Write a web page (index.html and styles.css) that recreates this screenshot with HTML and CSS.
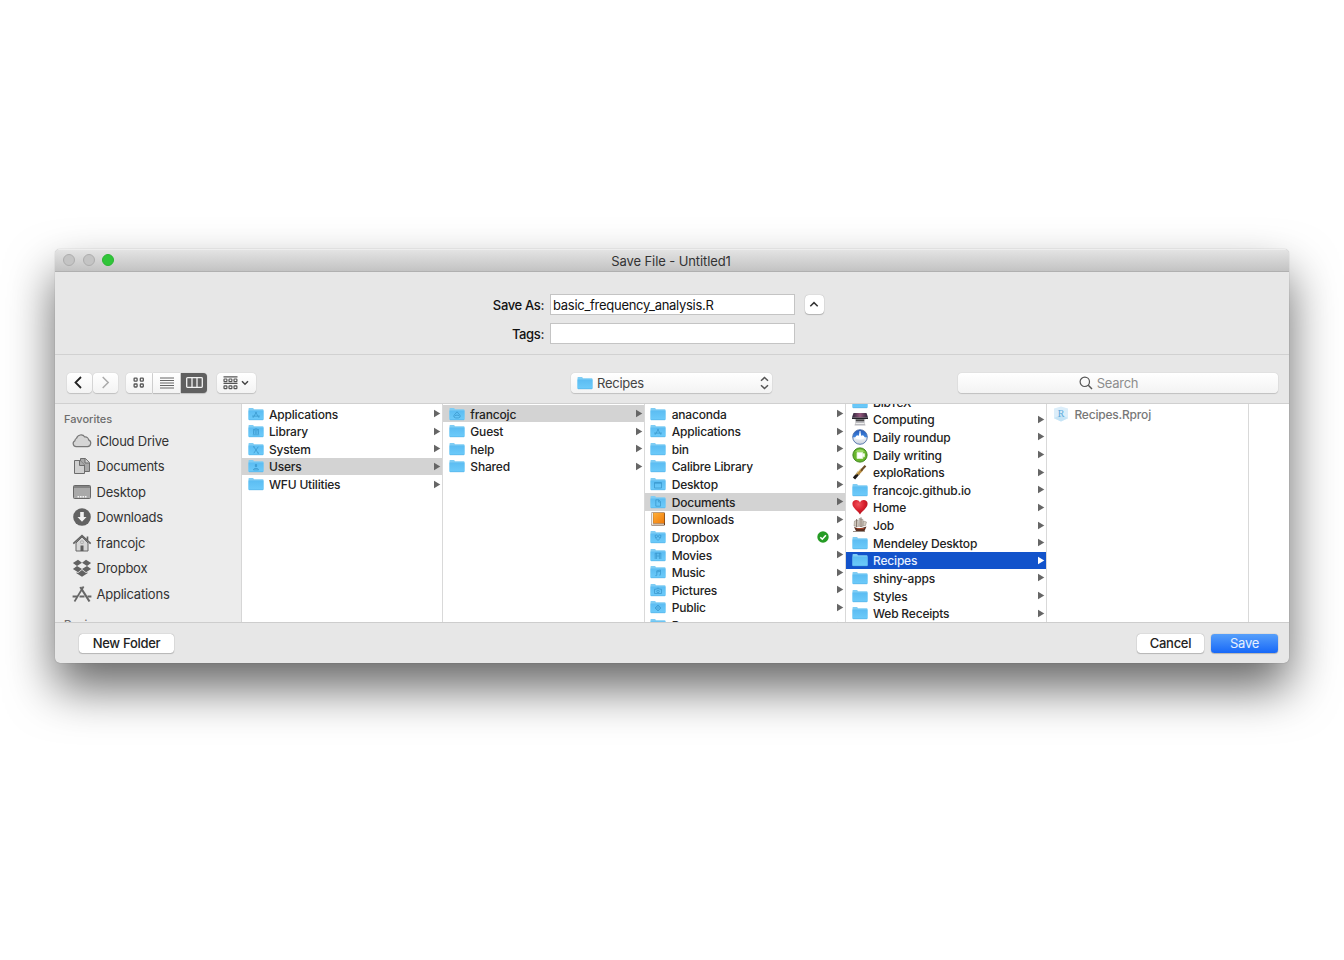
FILE: index.html
```html
<!DOCTYPE html>
<html lang="en">
<head>
<meta charset="utf-8">
<title>Save File - Untitled1</title>
<link rel="stylesheet" href="styles.css">
</head>
<body>
<svg class="defs" width="0" height="0">
  <defs>
    <linearGradient id="gFolder" x1="0" y1="0" x2="0" y2="1"><stop offset="0" stop-color="#5bbcf2"/><stop offset="1" stop-color="#6dcbfa"/></linearGradient>
    <linearGradient id="gOrange" x1="0" y1="0" x2="1" y2="1"><stop offset="0" stop-color="#ffb03a"/><stop offset="1" stop-color="#f07a08"/></linearGradient>
    <radialGradient id="gHeart" cx=".4" cy=".3" r=".8"><stop offset="0" stop-color="#f0525a"/><stop offset=".5" stop-color="#d81f2c"/><stop offset="1" stop-color="#9c0c17"/></radialGradient>
    <linearGradient id="gBlue" x1="0" y1="0" x2="0" y2="1"><stop offset="0" stop-color="#2458b8"/><stop offset=".5" stop-color="#3f86e0"/><stop offset=".55" stop-color="#eef2f8"/><stop offset="1" stop-color="#c9d0da"/></linearGradient>
    <linearGradient id="gPurple" x1="0" y1="0" x2="1" y2="0"><stop offset="0" stop-color="#2a2338"/><stop offset=".5" stop-color="#96587f"/><stop offset="1" stop-color="#2a2338"/></linearGradient>
  </defs>
  <symbol id="folder" viewBox="0 0 16 14"><path d="M.5 1.800Q.5 1 1.300 1H4.700Q5.200 1 5.600 1.500L6 2.200H14.700Q15.500 2.200 15.500 3V12.300Q15.500 13 14.800 13H1.200Q.5 13 .5 12.300Z" fill="#7fcdf4"/><path d="M.5 3.400H15.500V12.300Q15.500 13 14.800 13H1.200Q.5 13 .5 12.300Z" fill="url(#gFolder)"/><path d="M1 12.800H15" stroke="#4aa9de" stroke-width=".5"/></symbol>
  <symbol id="arrow" viewBox="0 0 8 9"><path d="M1 .8L7.300 4.500L1 8.200Z" fill="currentColor"/></symbol>
  <symbol id="gApps" viewBox="0 0 16 14"><path d="M5 10.800L8.600 4.800M11 10.800L7.400 4.800M4 9.100H12" /></symbol>
  <symbol id="gLib" viewBox="0 0 16 14"><path d="M5 6L8 4.700L11 6ZM5.500 6.500V10M7.200 6.500V10M8.900 6.500V10M10.500 6.500V10M4.800 10.800H11.200"/></symbol>
  <symbol id="gX" viewBox="0 0 16 14"><path d="M5.800 4.800L10.200 11.200M10.200 4.800L5.800 11.200M5 4.800H6.500M9.500 11.200H11"/></symbol>
  <symbol id="gUser" viewBox="0 0 16 14"><path d="M8 5.200V8M7.400 5.600H8.600V7.600H7.400ZM5.400 10.900Q5.400 9.400 8 9.400T10.600 10.900Z"/></symbol>
  <symbol id="gHome" viewBox="0 0 16 14"><path d="M8 4.800L5 8.300Q4 11 8 11T11 8.300ZM5.500 9.200L7 8.200H9L10.500 9.200"/></symbol>
  <symbol id="gDesk" viewBox="0 0 16 14"><path d="M4.500 5.500H11.500V11H4.500ZM4.500 6.200H11.500"/></symbol>
  <symbol id="gDoc" viewBox="0 0 16 14"><path d="M5.800 4.800H8.800L10.500 6.600V11.200H5.800ZM8.600 5V7H10.500"/></symbol>
  <symbol id="gBox" viewBox="0 0 16 14"><path d="M5 5.500L6.500 5L8 6.300L9.500 5L11 5.500L10.400 8L8 10.500L5.600 8ZM8 6.300L6 8M8 6.300L10 8"/></symbol>
  <symbol id="gFilm" viewBox="0 0 16 14"><path d="M5.200 5V11M10.800 5V11M6.600 5V11M9.400 5V11M5.200 5.200H10.800M6.600 8H9.400"/></symbol>
  <symbol id="gNote" viewBox="0 0 16 14"><path d="M6.800 10.300V5.800L10.500 5V9.700M6.800 7L10.500 6.200M5.400 10.600H6.800M9.200 10H10.500"/></symbol>
  <symbol id="gCam" viewBox="0 0 16 14"><path d="M4.500 6.200H6.400L7 5.300H9L9.600 6.200H11.500V10.500H4.500ZM8 7.200A1.200 1.200 0 1 0 8 9.700A1.200 1.200 0 1 0 8 7.200"/></symbol>
  <symbol id="gPub" viewBox="0 0 16 14"><path d="M8 5L11 8L8 11L5 8ZM8 6.500L9.500 8L8 9.500L6.500 8Z"/></symbol>
</svg>

<main class="window">
  <header class="titlebar">
    <div class="lights"><i></i><i></i><i class="on"></i></div>
    <h1>Save File - Untitled1</h1>
  </header>

  <section class="form">
    <span class="lbl">Save As:</span><div class="field"><span>basic_frequency_analysis.R</span></div>
    <button class="expand"><svg width="10" height="7" viewBox="0 0 10 7"><path d="M1.300 5.300L5 1.600L8.700 5.300" fill="none" stroke="#333" stroke-width="1.500"/></svg></button>
    <span class="lbl">Tags:</span><div class="field"></div>
  </section>

  <nav class="toolbar">
    <div class="history">
      <button><svg width="9" height="13" viewBox="0 0 9 13"><path d="M7 1L1.500 6.500L7 12" fill="none" stroke="#222" stroke-width="1.800"/></svg></button>
      <button><svg width="9" height="13" viewBox="0 0 9 13"><path d="M1.700 1L7.200 6.500L1.700 12" fill="none" stroke="#aaa" stroke-width="1.500"/></svg></button>
    </div>
    <div class="views">
      <button><svg width="12" height="12" viewBox="0 0 12 12" fill="none" stroke="#555" stroke-width="1.300"><rect x="1.100" y="1.100" width="3" height="3" rx=".7"/><rect x="7.300" y="1.100" width="3" height="3" rx=".7"/><rect x="1.100" y="7" width="3" height="3" rx=".7"/><rect x="7.300" y="7" width="3" height="3" rx=".7"/></svg></button>
      <button><svg width="14" height="12" viewBox="0 0 14 12"><path d="M0 1H14M0 3.500H14M0 6H14M0 8.500H14M0 11H14" stroke="#666" stroke-width="1.100"/></svg></button>
      <button class="active"><svg width="17" height="11" viewBox="0 0 17 11" fill="none" stroke="#f2f2f2" stroke-width="1.300"><rect x=".7" y=".7" width="15.600" height="9.600" rx=".8"/><path d="M6 1V10M11 1V10"/></svg></button>
    </div>
    <button class="group"><svg width="15" height="14" viewBox="0 0 15 14" fill="none" stroke="#555" stroke-width="1.200"><path d="M.5.8H14.500M.5 7.300H14.500"/><g><rect x="1" y="3" width="2.900" height="2.600" rx=".6"/><rect x="6" y="3" width="2.900" height="2.600" rx=".6"/><rect x="11" y="3" width="2.900" height="2.600" rx=".6"/><rect x="1" y="9.800" width="2.900" height="2.800" rx=".6"/><rect x="6" y="9.800" width="2.900" height="2.800" rx=".6"/><rect x="11" y="9.800" width="2.900" height="2.800" rx=".6"/></g></svg><svg width="8" height="6" viewBox="0 0 8 6"><path d="M1 1.200L4 4.200L7 1.200" fill="none" stroke="#444" stroke-width="1.500"/></svg></button>
    <button class="path"><svg class="ic" width="16" height="14"><use href="#folder"/></svg><span>Recipes</span><svg width="9" height="14" viewBox="0 0 9 14"><path d="M1 4.800L4.500 1.500L8 4.800M1 9.200L4.500 12.500L8 9.200" fill="none" stroke="#555" stroke-width="1.500"/></svg></button>
    <div class="search"><svg width="14" height="14" viewBox="0 0 14 14"><path d="M9.300 9.300L13 13" stroke="#555" stroke-width="1.500"/><circle cx="5.800" cy="5.800" r="4.700" fill="none" stroke="#555" stroke-width="1.200"/></svg><span>Search</span></div>
  </nav>

  <section class="browser">
    <aside class="sidebar">
      <h2>Favorites</h2>
      <ul>
        <li><svg width="20" height="18" viewBox="0 0 20 18"><path d="M5 15H15.500A3.300 3.300 0 0 0 16.500 8.700A3 3 0 0 0 13 6A4.300 4.300 0 0 0 5.300 7.200A2.500 2.500 0 0 0 3.800 9.500A2.900 2.900 0 0 0 5 15Z" fill="#d5d5d5" stroke="#777" stroke-width="1.100" transform="translate(-1.200 -1.500) scale(1.080)"/></svg><span>iCloud Drive</span></li>
        <li><svg width="20" height="18" viewBox="0 0 20 18" fill="#d0d0d0" stroke="#6c6c6c"><path d="M8.500 1.500H13.500L17.500 5.500V14.500H8.500Z" fill="#a8a8a8"/><path d="M13 1.500V6H17.500"/><path d="M2.500 3.500H8L12.500 8V16.500H2.500Z"/><path d="M7.500 3.500V8.500H12.500" fill="#aaa"/></svg><span>Documents</span></li>
        <li><svg width="20" height="18" viewBox="0 0 20 18"><rect x="1.500" y="2.500" width="17" height="13" rx="1" fill="#a9a9a9" stroke="#686868"/><path d="M2 4H18" stroke="#777" stroke-width="1.500"/><path d="M5.500 13.700H14.500" stroke="#f4f4f4" stroke-width="1.500" stroke-dasharray="1.600 .9"/></svg><span>Desktop</span></li>
        <li><svg width="20" height="18" viewBox="0 0 20 18"><circle cx="10" cy="9" r="8.800" fill="#626262"/><path d="M8.200 4H11.800V9H14.500L10 13.800L5.500 9H8.200Z" fill="#f2f2f2"/></svg><span>Downloads</span></li>
        <li><svg width="20" height="18" viewBox="0 0 20 18"><path d="M4 9V17H16V9L10 3Z" fill="#d6d6d6" stroke="#666"/><path d="M1.300 9.700L10 1.700L18.700 9.700M15.500 6.500V2.500" fill="none" stroke="#626262" stroke-width="1.600"/><path d="M8.500 17V11.500H11.500V17Z" fill="#5d5d5d"/><path d="M8.800 7H11.200V9.300H8.800Z" fill="#eee" stroke="#888" stroke-width=".6"/></svg><span>francojc</span></li>
        <li><svg width="20" height="18" viewBox="0 0 20 18" fill="#626262"><path d="M6 .8L.9 4L5 6.900L10 3.800ZM14 .8L10 3.800L15 6.900L19.100 4ZM5 6.900L.9 10L6 13.200L10 10ZM15 6.900L10 10L14 13.200L19.100 10ZM10 11L6 14.100L4.500 13.200V14.300L10 17.700L15.500 14.300V13.200L14 14.100Z"/></svg><span>Dropbox</span></li>
        <li><svg width="20" height="18" viewBox="0 0 20 18" fill="none" stroke="#666"><path d="M11.600 1.500L2.500 16.500" stroke-width="1.700"/><path d="M8.300 2L17.500 16.500" stroke-width="2.200"/><path d="M.6 11.500H5M7.500 11.500H12.500M15.500 11.500H19.400" stroke-width="1.800"/></svg><span>Applications</span></li>
      </ul>
      <h2>Devices</h2>
    </aside>

    <ul class="column">
      <li><svg class="ic"><use href="#folder"/><use class="g" href="#gApps"/></svg><span>Applications</span><svg class="ar"><use href="#arrow"/></svg></li>
      <li><svg class="ic"><use href="#folder"/><use class="g" href="#gLib"/></svg><span>Library</span><svg class="ar"><use href="#arrow"/></svg></li>
      <li><svg class="ic"><use href="#folder"/><use class="g" href="#gX"/></svg><span>System</span><svg class="ar"><use href="#arrow"/></svg></li>
      <li class="trail"><svg class="ic"><use href="#folder"/><use class="g" href="#gUser"/></svg><span>Users</span><svg class="ar"><use href="#arrow"/></svg></li>
      <li><svg class="ic"><use href="#folder"/></svg><span>WFU Utilities</span><svg class="ar"><use href="#arrow"/></svg></li>
    </ul>

    <ul class="column">
      <li class="trail"><svg class="ic"><use href="#folder"/><use class="g" href="#gHome"/></svg><span>francojc</span><svg class="ar"><use href="#arrow"/></svg></li>
      <li><svg class="ic"><use href="#folder"/></svg><span>Guest</span><svg class="ar"><use href="#arrow"/></svg></li>
      <li><svg class="ic"><use href="#folder"/></svg><span>help</span><svg class="ar"><use href="#arrow"/></svg></li>
      <li><svg class="ic"><use href="#folder"/></svg><span>Shared</span><svg class="ar"><use href="#arrow"/></svg></li>
    </ul>

    <ul class="column">
      <li><svg class="ic"><use href="#folder"/></svg><span>anaconda</span><svg class="ar"><use href="#arrow"/></svg></li>
      <li><svg class="ic"><use href="#folder"/><use class="g" href="#gApps"/></svg><span>Applications</span><svg class="ar"><use href="#arrow"/></svg></li>
      <li><svg class="ic"><use href="#folder"/></svg><span>bin</span><svg class="ar"><use href="#arrow"/></svg></li>
      <li><svg class="ic"><use href="#folder"/></svg><span>Calibre Library</span><svg class="ar"><use href="#arrow"/></svg></li>
      <li><svg class="ic"><use href="#folder"/><use class="g" href="#gDesk"/></svg><span>Desktop</span><svg class="ar"><use href="#arrow"/></svg></li>
      <li class="trail"><svg class="ic"><use href="#folder"/><use class="g" href="#gDoc"/></svg><span>Documents</span><svg class="ar"><use href="#arrow"/></svg></li>
      <li><svg class="ic" viewBox="0 0 16 14"><rect x="1" y=".5" width="14" height="13" rx="1" fill="#5a3418"/><rect x="1.300" y=".8" width="1.800" height="12" fill="#eee"/><rect x="3.200" y=".8" width="11.200" height="10.600" fill="url(#gOrange)"/><path d="M2 12.200H14" stroke="#efe6da" stroke-width="1.200"/></svg><span>Downloads</span><svg class="ar"><use href="#arrow"/></svg></li>
      <li><svg class="ic"><use href="#folder"/><use class="g" href="#gBox"/></svg><span>Dropbox</span><svg class="badge" viewBox="0 0 12 12"><circle cx="6" cy="6" r="5.700" fill="#259b24"/><path d="M3.300 6.200L5.300 8.200L8.900 4.200" fill="none" stroke="#fff" stroke-width="1.600"/></svg><svg class="ar"><use href="#arrow"/></svg></li>
      <li><svg class="ic"><use href="#folder"/><use class="g" href="#gFilm"/></svg><span>Movies</span><svg class="ar"><use href="#arrow"/></svg></li>
      <li><svg class="ic"><use href="#folder"/><use class="g" href="#gNote"/></svg><span>Music</span><svg class="ar"><use href="#arrow"/></svg></li>
      <li><svg class="ic"><use href="#folder"/><use class="g" href="#gCam"/></svg><span>Pictures</span><svg class="ar"><use href="#arrow"/></svg></li>
      <li><svg class="ic"><use href="#folder"/><use class="g" href="#gPub"/></svg><span>Public</span><svg class="ar"><use href="#arrow"/></svg></li>
      <li><svg class="ic"><use href="#folder"/></svg><span>Papers</span><svg class="ar"><use href="#arrow"/></svg></li>
    </ul>

    <ul class="column scrolled">
      <li><svg class="ic"><use href="#folder"/></svg><span>BibTeX</span></li>
      <li><svg class="ic" viewBox="0 0 16 14"><path d="M1.500 1H14.500L16 5.500H0Z" fill="url(#gPurple)"/><path d="M0 5.500H16V7H0Z" fill="#24222a"/><path d="M2.500 7H13.500L12.500 10L13.500 13.500H2.500L3.500 10Z" fill="#b9b9bd"/><path d="M4 8.300H12" stroke="#444" stroke-width="1.800"/><path d="M3.500 11.500H12.500" stroke="#eee"/></svg><span>Computing</span><svg class="ar"><use href="#arrow"/></svg></li>
      <li><svg class="ic big" viewBox="0 0 16 16"><circle cx="8" cy="8" r="7.300" fill="url(#gBlue)" stroke="#4d6ea8" stroke-width=".9"/><path d="M3 9Q4.500 5 6.500 7L8 3L9.500 7Q11.500 5 13 9Q8 12 3 9Z" fill="#fff"/><path d="M8 2V6" stroke="#fff"/></svg><span>Daily roundup</span><svg class="ar"><use href="#arrow"/></svg></li>
      <li><svg class="ic big" viewBox="0 0 16 16"><circle cx="8" cy="8" r="7.100" fill="#68b52c" stroke="#3d861a" stroke-width="1"/><path d="M3 4.500Q8 .5 13 4.500Q8 6 3 4.500Z" fill="#9ad763"/><path d="M5 5.500H10.800V11.500H5ZM10.800 6.700H12.500V9.800H10.800" fill="#fff" stroke="#dff2cf" stroke-width=".8"/></svg><span>Daily writing</span><svg class="ar"><use href="#arrow"/></svg></li>
      <li><svg class="ic big" viewBox="0 0 16 16"><path d="M2 14.500L7 8.500" stroke="#1f1a18" stroke-width="3"/><path d="M5.500 10.300L10 5.500" stroke="#b48a3e" stroke-width="3"/><path d="M9 6.500L13.500 1.700" stroke="#6d4d27" stroke-width="2.200"/><path d="M3.500 11L8.800 4.900" stroke="#ecd08a" stroke-width=".9"/></svg><span>exploRations</span><svg class="ar"><use href="#arrow"/></svg></li>
      <li><svg class="ic"><use href="#folder"/></svg><span>francojc.github.io</span><svg class="ar"><use href="#arrow"/></svg></li>
      <li><svg class="ic big" viewBox="0 0 16 16"><path d="M8 15.500C6 12 .4 9 .4 4.700C.4.600 6.200-.3 8 3.400C9.800-.3 15.600.6 15.600 4.700C15.600 9 10 12 8 15.500Z" fill="url(#gHeart)"/></svg><span>Home</span><svg class="ar"><use href="#arrow"/></svg></li>
      <li><svg class="ic big" viewBox="0 0 16 16"><path d="M2 10Q7 12.500 14.500 9.500L12.500 14H4Z" fill="#5b2f20"/><path d="M2.500 4L6 3L6.500 9.500L2 9ZM7 1.500L11 2.500L10.500 9.500H7.500ZM11.500 4L14.500 5L13.500 8.500L11 9Z" fill="#d3cbc0" stroke="#867c72" stroke-width=".5"/><path d="M9 .3V10M4.500 2V10M1 14.500H13" stroke="#6a5a50" stroke-width=".7"/><path d="M5 11.500H12" stroke="#b4472d" stroke-width=".8"/></svg><span>Job</span><svg class="ar"><use href="#arrow"/></svg></li>
      <li><svg class="ic"><use href="#folder"/></svg><span>Mendeley Desktop</span><svg class="ar"><use href="#arrow"/></svg></li>
      <li class="selected"><svg class="ic"><use href="#folder"/></svg><span>Recipes</span><svg class="ar"><use href="#arrow"/></svg></li>
      <li><svg class="ic"><use href="#folder"/></svg><span>shiny-apps</span><svg class="ar"><use href="#arrow"/></svg></li>
      <li><svg class="ic"><use href="#folder"/></svg><span>Styles</span><svg class="ar"><use href="#arrow"/></svg></li>
      <li><svg class="ic"><use href="#folder"/></svg><span>Web Receipts</span><svg class="ar"><use href="#arrow"/></svg></li>
    </ul>

    <ul class="column">
      <li class="dim"><svg class="ic big" viewBox="0 0 16 16"><path d="M8 .5L15 2.500V12.500L8 15.500L1 12.500V2.500Z" fill="#dceefa"/><path d="M1 12L8 9L15 12L8 15.500Z" fill="#c5e4f6"/><text class="rmark" x="8" y="11" text-anchor="middle">R</text></svg><span>Recipes.Rproj</span></li>
    </ul>
  </section>

  <footer class="footer">
    <button class="btn new">New Folder</button>
    <button class="btn cancel">Cancel</button>
    <button class="btn save">Save</button>
  </footer>
</main>
</body>
</html>
```
FILE: styles.css
```css
* { box-sizing: border-box; }
body {
  margin: 0;
  height: 960px;
  padding: 249px 0 0 55px;
  background: #fff;
  overflow: hidden;
  font-family: Inter, "Liberation Sans", sans-serif;
  font-size: 13px;
  color: #222;
}
ul { list-style: none; margin: 0; padding: 0; }
svg { display: block; flex: none; }
.defs { position: absolute; }
button {
  font: inherit;
  color: inherit;
  border: 0;
  padding: 0;
  display: flex;
  align-items: center;
  justify-content: center;
}
.window {
  width: 1234px;
  height: 414px;
  border-radius: 5px;
  background: #e7e7e7;
  overflow: hidden;
  display: flex;
  flex-direction: column;
  box-shadow: 0 0 1px rgba(0,0,0,.4), 0 25px 48px rgba(0,0,0,.6);
}
.titlebar {
  flex: none;
  height: 23px;
  display: grid;
  grid-template-columns: 120px 1fr 122px;
  align-items: center;
  background: linear-gradient(#e3e3e3, #c3c3c3);
  border-top: 1px solid #eee;
  border-bottom: 1px solid #b0b0b0;
}
.titlebar h1 {
  margin: 0;
  font-size: 13px;
  font-weight: 400;
  letter-spacing: -.1px;
  text-align: center;
  color: #333;
}
.lights { display: flex; gap: 7.500px; padding: 0 0 1px 8px; }
.lights i {
  width: 12px;
  height: 12px;
  border-radius: 50%;
  background: #c4c4c4;
  border: 1px solid #adadad;
}
.lights .on { background: #30c539; border-color: #2ab532; }

.form {
  flex: none;
  height: 82.500px;
  border-bottom: 1px solid #d1d1d1;
  padding-top: 22px;
  display: grid;
  grid-template-columns: 489px 5.500px 245px 10px 20px;
  grid-template-rows: 21px 21px;
  row-gap: 8px;
  align-items: center;
}
.lbl {
  grid-column: 1;
  text-align: right;
  color: #111;
  font-weight: 500;
  letter-spacing: -.36px;
  padding-top: 1px;
}
.field {
  grid-column: 3;
  height: 21.500px;
  background: #fff;
  border: 1px solid #c4c4c4;
  display: flex;
  align-items: center;
  padding: 1px 0 0 2.500px;
  color: #111;
  letter-spacing: -.28px;
}
.expand {
  grid-column: 5;
  width: 19px;
  height: 19px;
  background: #fff;
  border-radius: 4px;
  box-shadow: 0 0 1px rgba(0,0,0,.35), 0 1px 1px rgba(0,0,0,.2);
}

.toolbar {
  flex: none;
  height: 49.500px;
  padding: 8px 11px 0 12px;
  display: flex;
  align-items: center;
  border-bottom: 1px solid #d0d0d0;
}
.toolbar button, .search {
  height: 20px;
  background: linear-gradient(#fff, #f3f3f3);
  border-radius: 4px;
  box-shadow: 0 0 1px rgba(0,0,0,.25), 0 1px 1px rgba(0,0,0,.15);
}
.history { display: flex; gap: 1px; }
.history button { width: 25px; }
.history button:first-child { padding-right: 2px; }
.views { display: flex; gap: 1px; margin-left: 8px; }
.views button { width: 26px; border-radius: 4px 0 0 4px; }
.views button:nth-child(2) { width: 27px; border-radius: 0; }
.views .active { width: 26px; background: #606060; border-radius: 0 4px 4px 0; }
.toolbar .group { width: 39px; gap: 3px; margin-left: 9.500px; }
.toolbar .path {
  width: 201px;
  margin-left: 315.500px;
  padding: 0 3px 0 6px;
  justify-content: flex-start;
  color: #444;
}
.path span { margin-left: 4px; flex: 1; text-align: left; letter-spacing: -.25px; }
.search {
  width: 320px;
  margin-left: auto;
  padding-right: 19px;
  display: flex;
  align-items: center;
  justify-content: center;
  gap: 4px;
  color: #8d8d8d;
  letter-spacing: -.3px;
}

.browser {
  flex: 1;
  min-height: 0;
  display: flex;
  background: #fff;
  overflow: hidden;
}
.sidebar {
  flex: none;
  width: 187px;
  height: 100%;
  background: #ececec;
  border-right: 1px solid #d6d6d6;
  overflow: hidden;
}
.sidebar h2 {
  margin: 0;
  padding: 7px 0 0 9px;
  font-size: 11px;
  line-height: 16px;
  font-weight: 500;
  color: #6d6d6d;
}
.sidebar ul { padding-top: 1px; }
.sidebar li {
  height: 25.500px;
  display: flex;
  align-items: center;
  padding-left: 16.500px;
  gap: 5px;
  color: #333;
  letter-spacing: -.23px;
}
.sidebar ul + h2 { padding-top: 9px; }

.column {
  flex: none;
  width: 201.350px;
  height: 100%;
  overflow: hidden;
  border-right: 1px solid #d9d9d9;
  padding-top: .8px;
}
.column li {
  height: 17.640px;
  display: flex;
  align-items: center;
  padding: 0 1px 0 6px;
  font-size: 12px;
  font-weight: 500;
  letter-spacing: -.19px;
  color: #222;
}
.column span { flex: 1; padding-left: 5px; padding-top: 1px; white-space: nowrap; }
.column.scrolled { padding-top: 0; }
.scrolled li:first-child { margin-top: -11.100px; }
.ic { width: 16px; height: 14px; overflow: visible; }
.column .ic { margin-left: -.5px; margin-right: .5px; }
.ic.big { height: 16px; }
.ar { width: 8px; height: 9px; color: #666; }
.g { fill: none; stroke: #318fc5; stroke-width: .8; opacity: .8; }
.badge { width: 12px; height: 12px; margin-right: 7px; }
.trail { background: #d3d3d3; }
.column .selected { background: #1253cb; color: #e8f1ff; }
.selected .ar { color: #fff; }
.column .dim { color: #777; }
.rmark { font: 10px "Liberation Serif", serif; fill: #5cabdc; }

.footer {
  flex: none;
  height: 41px;
  border-top: 1px solid #cdcdcd;
  display: flex;
  align-items: center;
  gap: 7px;
  padding: 0 11px 0 24px;
}
.btn {
  height: 19px;
  background: #fff;
  border-radius: 3.500px;
  color: #222;
  font-weight: 500;
  letter-spacing: -.28px;
  box-shadow: 0 0 1px rgba(0,0,0,.45), 0 1px 1px rgba(0,0,0,.18);
}
.new { width: 95px; margin-right: auto; }
.cancel { width: 67px; }
.save { width: 67px; background: linear-gradient(#569ffa, #1768f8); color: #e6f0ff; font-weight: 400; }
```
